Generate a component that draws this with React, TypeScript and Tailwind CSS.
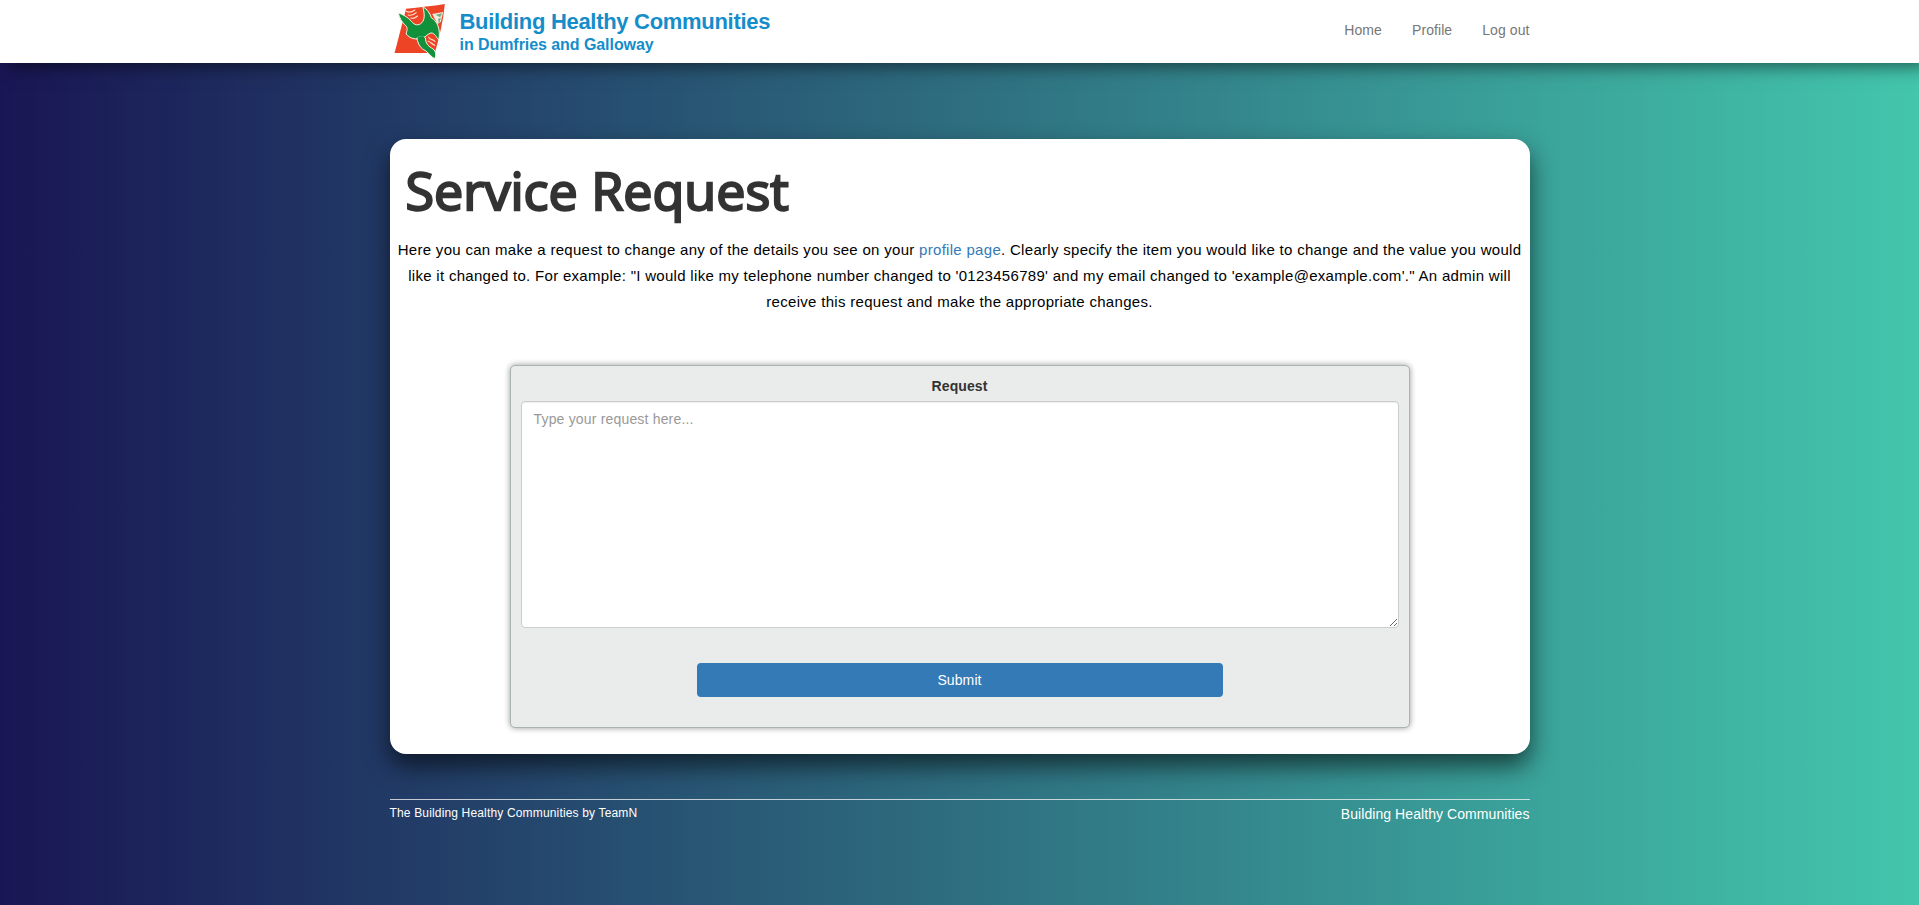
import React from "react";

function LogoMark() {
  return (
    <svg width="56" height="58" viewBox="40.5 6 168 174" className="block" aria-hidden="true">
      <path d="M80 26 C120 22 160 18 196 12 C192 60 180 110 166 159 L45 159 C54 128 66 76 80 26 Z" fill="#ee4426" />
      <path d="M158 42 L191 36 L184 66 L174 72 Z" fill="#f4ecdc" />
      <path d="M168 44 L188 40 L182 52 Z M176 56 L184 54 L178 74 Z" fill="#6fae84" />
      <path
        d="M56 38 C70 44 84 50 96 64 C104 76 118 78 127 68 C136 58 136 44 130 20 C144 28 152 42 156 54 C172 62 184 86 178 120 C170 112 166 98 154 99 C142 102 138 114 126 114 C108 120 92 116 80 102 C82 92 86 84 78 76 C66 66 60 54 56 38 Z"
        fill="#12913d"
        stroke="#fbf6ea"
        strokeWidth="3"
        strokeLinejoin="round"
      />
      <path
        d="M112 114 C120 110 130 108 138 114 C138 130 146 138 156 144 C168 150 172 162 166 176 C156 172 148 160 138 152 C124 146 116 134 112 114 Z"
        fill="#12913d"
        stroke="#fbf6ea"
        strokeWidth="3"
        strokeLinejoin="round"
      />
      <path d="M114 112 C122 108 128 108 134 110 L132 122 L118 122 Z" fill="#12913d" />
      <path
        d="M80 34 C88 38 98 36 106 30 M86 45 C94 47 104 44 110 38 M94 54 C100 56 108 54 114 48 M148 112 C150 120 160 116 166 124 M146 124 C150 122 156 132 166 136"
        fill="none"
        stroke="#fbdccb"
        strokeWidth="3.5"
        strokeLinecap="round"
      />
    </svg>
  );
}

function Header() {
  return (
    <header className="relative h-[63px] bg-white shadow-[8px_4px_16px_rgba(0,0,0,0.5)]">
      <div className="mx-auto flex h-full w-[1140px] justify-between">
        <a href="#" className="flex gap-[11px] pl-[3px] pt-0.5">
          <LogoMark />
          <div className="whitespace-nowrap font-bold text-[#158dca]">
            <div className="mt-[7px] text-[22px] leading-[26px] tracking-[-0.3px]">Building Healthy Communities</div>
            <div className="mt-px text-base leading-[18px] tracking-[-0.06px]">in Dumfries and Galloway</div>
          </div>
        </a>
        <nav className="flex gap-[30px] pt-5 text-sm tracking-[0.08px] text-[#777]">
          <a href="#">Home</a>
          <a href="#">Profile</a>
          <a href="#">Log out</a>
        </nav>
      </div>
    </header>
  );
}

function RequestForm() {
  return (
    <form className="mx-auto mt-[50px] flex h-[363px] w-[900px] flex-col items-center rounded-[5px] border border-[#aab3b1] bg-[#eaeceb] px-2.5 pt-2.5 shadow-[0_0_6px_rgba(0,0,0,0.4)]">
      <label htmlFor="request" className="mb-[5px] text-sm leading-5 font-bold tracking-[0.1px] text-[#333]">
        Request
      </label>
      <textarea
        id="request"
        placeholder="Type your request here..."
        className="h-[227px] w-full shrink-0 rounded border border-[#ccc] bg-white px-3 py-[7px] text-sm leading-5 tracking-[0.18px] shadow-[inset_0_1px_1px_rgba(0,0,0,0.075)] placeholder:text-[#999]"
      />
      <button type="button" className="mt-[35px] h-[34px] w-[526px] rounded bg-[#337ab7] text-sm tracking-[0.1px] text-white">
        Submit
      </button>
    </form>
  );
}

export default function App() {
  return (
    <div className="min-h-screen overflow-x-hidden bg-linear-to-r/srgb from-[#191654] to-[#43c6ac] font-['Liberation_Sans',Arial,sans-serif] text-[#333]">
      <Header />
      <main className="mx-auto mt-[76px] h-[615px] w-[1140px] rounded-2xl bg-white shadow-[0_12px_24px_rgba(0,0,0,0.6)]">
        <h1 className="pl-4 pt-[15px] font-['Open_Sans',sans-serif] text-[52px] leading-[72px] font-normal [-webkit-text-stroke:2.3px_#333]">
          Service Request
        </h1>
        <p className="mt-[11px] text-center text-[15px] leading-[26px] tracking-[0.3px] text-black">
          Here you can make a request to change any of the details you see on your{" "}
          <a href="#" className="text-[#337ab7]">profile page</a>
          . Clearly specify the item you would like to change and the value you would
          <br />
          like it changed to. For example: "I would like my telephone number changed to '0123456789' and my email changed to
          'example@example.com'." An admin will
          <br />
          receive this request and make the appropriate changes.
        </p>
        <RequestForm />
      </main>
      <footer className="mx-auto mt-[45px] flex w-[1140px] justify-between border-t border-[#eee]/80 text-white">
        <small className="pt-[5px] text-xs leading-[17px] tracking-[0.16px]">The Building Healthy Communities by TeamN</small>
        <nav className="pt-1 text-sm leading-5 tracking-[0.07px]">
          <a href="#">Building Healthy Communities</a>
        </nav>
      </footer>
    </div>
  );
}
